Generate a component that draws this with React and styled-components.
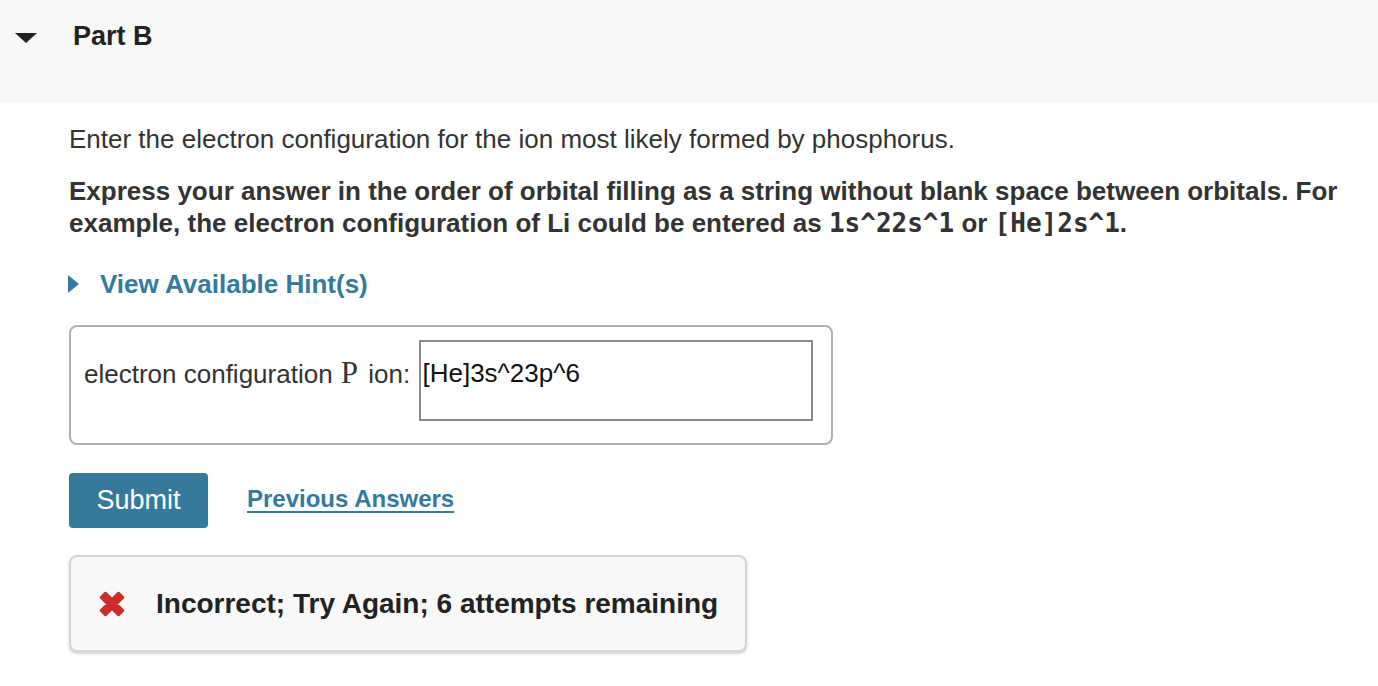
import styled, { createGlobalStyle } from 'styled-components';

const GlobalStyle = createGlobalStyle`
  html, body {
    margin: 0;
    padding: 0;
    background: #ffffff;
  }
  body {
    font-family: 'Liberation Sans', Arial, Helvetica, sans-serif;
    color: #333333;
  }
`;

const Page = styled.div`
  width: 1378px;
  height: 686px;
  overflow: hidden;
`;

const Header = styled.div`
  display: flex;
  align-items: center;
  height: 103px;
  padding: 0 0 30px 15px;
  box-sizing: border-box;
  background: #f8f8f8;
`;

const Caret = styled.span`
  width: 0;
  height: 0;
  border-left: 11px solid transparent;
  border-right: 11px solid transparent;
  border-top: 10px solid #222222;
  margin-right: 36px;
  margin-top: 2px;
`;

const PartTitle = styled.h2`
  margin: 0;
  font-size: 27px;
  font-weight: 700;
  color: #222222;
`;

const Body = styled.div`
  padding: 20px 0 0 69px;
`;

const Prompt = styled.p`
  margin: 0 0 20px;
  font-size: 26px;
  line-height: 32px;
`;

const Instructions = styled.p`
  margin: 0;
  font-size: 26px;
  line-height: 32px;
  font-weight: 700;
  max-width: 1290px;
`;

const Code = styled.code`
  font-family: 'DejaVu Sans Mono', 'Liberation Mono', monospace;
  font-size: 26px;
  line-height: 1;
  font-weight: 700;
`;

const HintToggle = styled.div`
  display: flex;
  align-items: center;
  margin: 29px 0 0 -1px;
  height: 32px;
  color: #337a9d;
  font-size: 26px;
  font-weight: 700;
`;

const HintArrow = styled.span`
  width: 0;
  height: 0;
  border-top: 9px solid transparent;
  border-bottom: 9px solid transparent;
  border-left: 11px solid #337a9d;
  margin-right: 21px;
`;

const AnswerBox = styled.div`
  display: flex;
  align-items: flex-start;
  width: 764px;
  height: 120px;
  margin-top: 25px;
  padding: 13px 0 0 13px;
  box-sizing: border-box;
  border: 2px solid #b0b0b0;
  border-radius: 8px;
`;

const AnswerLabel = styled.span`
  font-size: 26px;
  line-height: 32px;
  margin-top: 17px;
  color: #333333;
  white-space: pre;
`;

const MathVar = styled.span`
  font-family: 'Liberation Serif', 'Times New Roman', serif;
  font-size: 31px;
  line-height: 1;
  margin: 0 3px 0 1px;
`;

const AnswerInput = styled.div`
  width: 394px;
  height: 81px;
  margin-left: 2px;
  padding: 17px 0 0 1px;
  box-sizing: border-box;
  border: 2px solid #8a8a8a;
  font-size: 26px;
  line-height: 28px;
  color: #111111;
`;

const Actions = styled.div`
  display: flex;
  align-items: center;
  gap: 39px;
  margin-top: 28px;
`;

const SubmitButton = styled.button`
  width: 139px;
  height: 55px;
  border: none;
  border-radius: 4px;
  background: #367a9b;
  color: #ffffff;
  font-family: inherit;
  font-size: 27px;
  cursor: pointer;
`;

const PreviousLink = styled.a`
  color: #337a9d;
  font-size: 24px;
  font-weight: 700;
  text-decoration: underline;
  text-underline-offset: 4px;
  text-decoration-thickness: 2px;
  margin-top: -4px;
`;

const Feedback = styled.div`
  display: flex;
  align-items: center;
  width: 678px;
  height: 97px;
  margin-top: 27px;
  padding-left: 26px;
  box-sizing: border-box;
  background: #f8f8f8;
  border: 2px solid #d4d4d4;
  border-radius: 8px;
  box-shadow: 0 2px 3px rgba(0, 0, 0, 0.18);
`;

const FeedbackText = styled.span`
  margin-left: 29px;
  font-size: 28px;
  font-weight: 700;
  color: #222222;
`;

const CrossIcon = () => (
  <svg width="30" height="30" viewBox="0 0 30 30">
    <path
      d="M4 8.5 L8.5 4 L15 10.5 L21.5 4 L26 8.5 L19.5 15 L26 21.5 L21.5 26 L15 19.5 L8.5 26 L4 21.5 L10.5 15 Z"
      fill="#cc2b2b"
      stroke="#cc2b2b"
      strokeWidth="2.5"
      strokeLinejoin="round"
    />
  </svg>
);

export default function App() {
  return (
    <Page>
      <GlobalStyle />
      <Header>
        <Caret />
        <PartTitle>Part B</PartTitle>
      </Header>
      <Body>
        <Prompt>Enter the electron configuration for the ion most likely formed by phosphorus.</Prompt>
        <Instructions>
          Express your answer in the order of orbital filling as a string without blank space between orbitals. For
          example, the electron configuration of Li could be entered as <Code>1s^22s^1</Code> or <Code>[He]2s^1</Code>.
        </Instructions>
        <HintToggle>
          <HintArrow />
          View Available Hint(s)
        </HintToggle>
        <AnswerBox>
          <AnswerLabel>
            electron configuration <MathVar>P</MathVar> ion:{' '}
          </AnswerLabel>
          <AnswerInput>[He]3s^23p^6</AnswerInput>
        </AnswerBox>
        <Actions>
          <SubmitButton>Submit</SubmitButton>
          <PreviousLink href="#">Previous Answers</PreviousLink>
        </Actions>
        <Feedback>
          <CrossIcon />
          <FeedbackText>Incorrect; Try Again; 6 attempts remaining</FeedbackText>
        </Feedback>
      </Body>
    </Page>
  );
}
